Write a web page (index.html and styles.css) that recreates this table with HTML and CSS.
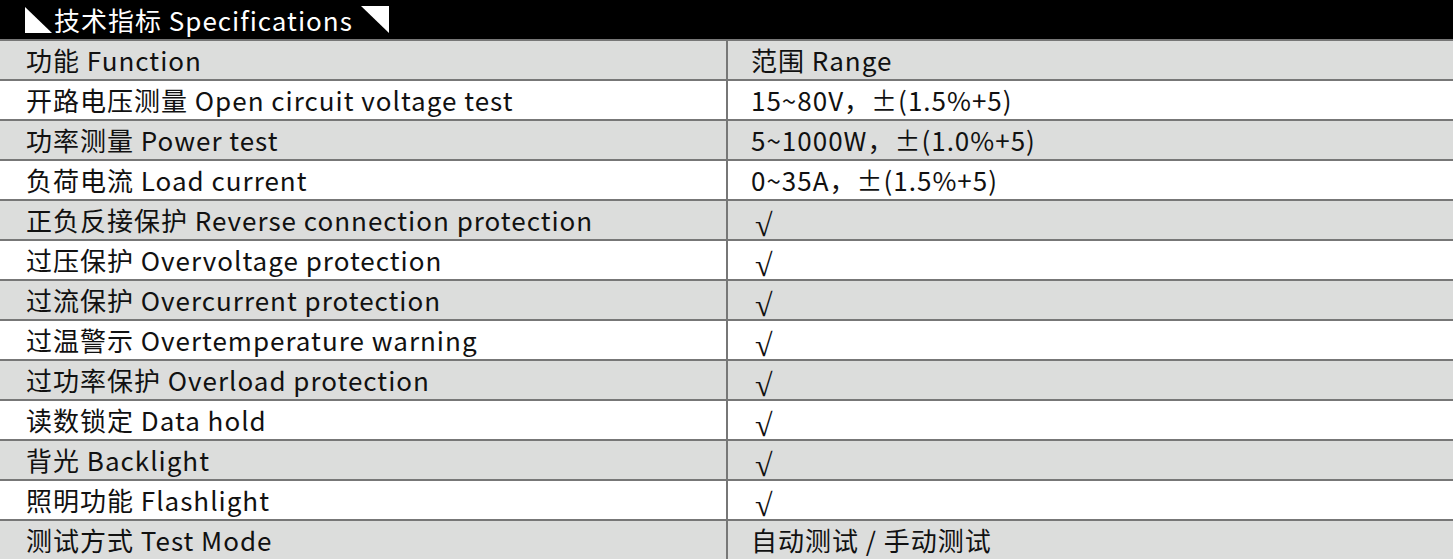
FILE: index.html
```html
<!DOCTYPE html>
<html lang="zh">
<head>
<meta charset="utf-8">
<title>技术指标 Specifications</title>
<link rel="stylesheet" href="styles.css">
</head>
<body>
<div class="sheet">
  <div class="title">
    <svg class="tri" width="27" height="26" viewBox="0 0 27 26"><polygon points="0,0 27,26 0,26" fill="#fff"/></svg>
    <span class="title-text">技术指标 Specifications</span>
    <svg class="tri" width="28" height="27" viewBox="0 0 28 27"><polygon points="0,0 28,0 28,27" fill="#fff"/></svg>
  </div>
  <div class="row gray"><div class="cell">功能 Function</div><div class="cell val">范围 Range</div></div>
  <div class="row"><div class="cell">开路电压测量 Open circuit voltage test</div><div class="cell val">15~80V，±(1.5%+5)</div></div>
  <div class="row gray"><div class="cell">功率测量 Power test</div><div class="cell val">5~1000W，±(1.0%+5)</div></div>
  <div class="row"><div class="cell">负荷电流 Load current</div><div class="cell val">0~35A，±(1.5%+5)</div></div>
  <div class="row gray"><div class="cell">正负反接保护 Reverse connection protection</div><div class="cell val"><span class="check">√</span></div></div>
  <div class="row"><div class="cell">过压保护 Overvoltage protection</div><div class="cell val"><span class="check">√</span></div></div>
  <div class="row gray"><div class="cell">过流保护 Overcurrent protection</div><div class="cell val"><span class="check">√</span></div></div>
  <div class="row"><div class="cell">过温警示 Overtemperature warning</div><div class="cell val"><span class="check">√</span></div></div>
  <div class="row gray"><div class="cell">过功率保护 Overload protection</div><div class="cell val"><span class="check">√</span></div></div>
  <div class="row"><div class="cell">读数锁定 Data hold</div><div class="cell val"><span class="check">√</span></div></div>
  <div class="row gray"><div class="cell">背光 Backlight</div><div class="cell val"><span class="check">√</span></div></div>
  <div class="row"><div class="cell">照明功能 Flashlight</div><div class="cell val"><span class="check">√</span></div></div>
  <div class="row gray"><div class="cell">测试方式 Test Mode</div><div class="cell val">自动测试 / 手动测试</div></div>
</div>
</body>
</html>
```

FILE: styles.css
```css
html, body {
  margin: 0;
  padding: 0;
  background: #fff;
}
body {
  font-family: "Noto Sans CJK SC", "Noto Sans", sans-serif;
  color: #111;
}
.sheet {
  width: 1453px;
}
.title {
  height: 39px;
  background: #000;
  color: #fff;
  display: flex;
  align-items: center;
  padding-left: 25px;
  gap: 2px;
  font-size: 26px;
  letter-spacing: 1px;
  line-height: 39px;
}
.title-text {
  margin-right: 6px;
}
.tri {
  display: block;
}
.row {
  display: grid;
  grid-template-columns: 726px 1fr;
  height: 38px;
  border-top: 2px solid #777;
  font-size: 26px;
  letter-spacing: 1px;
  line-height: 38px;
}
.row.gray {
  background: #dcdddc;
}
.cell {
  padding-left: 26px;
  white-space: nowrap;
}
.cell.val {
  border-left: 2px solid #777;
  padding-left: 23px;
}
.check {
  display: inline-block;
  margin-left: 4px;
  font-family: "Liberation Serif", serif;
  font-size: 32px;
  line-height: 22px;
  transform: translateY(5px);
}
```
